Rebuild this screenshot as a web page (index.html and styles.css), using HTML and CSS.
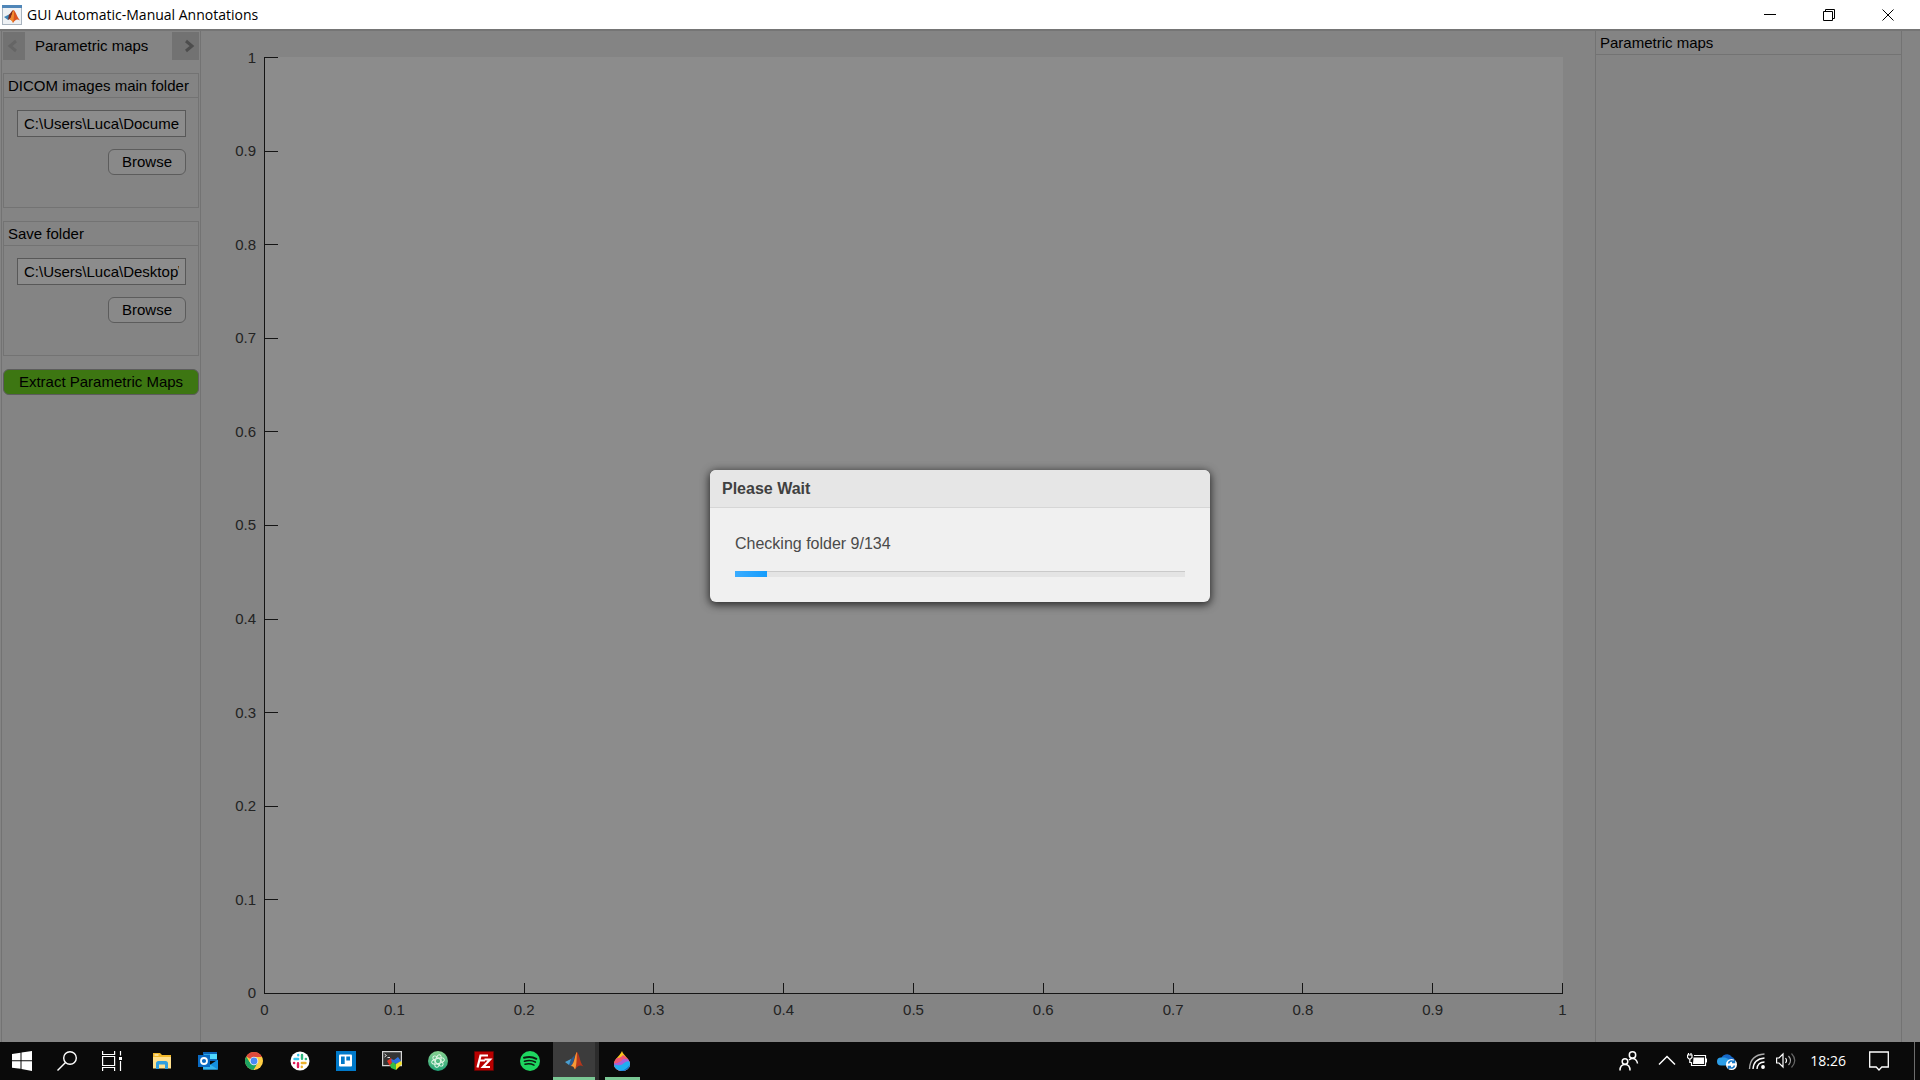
FILE: index.html
```html
<!DOCTYPE html>
<html lang="en">
<head>
<meta charset="utf-8">
<title>GUI Automatic-Manual Annotations</title>
<link rel="stylesheet" href="styles.css">
</head>
<body>
<header class="titlebar">
  <svg class="app-icon" viewBox="0 0 20 20" aria-hidden="true">
    <rect x="0.5" y="0.5" width="19" height="19" fill="#eef1f4" stroke="#a9b4bf"/>
    <rect x="0" y="0" width="20" height="3" fill="#4f86b8"/>
    <path d="M2 12 7 9.500 9 11 6 15z" fill="#3f83b5"/>
    <path d="M7 9.500C9 8 10 5 11.500 5L9 13 6 15z" fill="#7a2a1c"/>
    <path d="M11.500 5C13.500 6 15 12 18 15.500 15 13.500 13 15 11 18 10.500 16 9 14.500 7.500 14.500 10 12 10 7 11.500 5z" fill="#d9541e"/>
    <path d="M11.500 5C12.500 8 12 13 11 18 10.500 16 9 14.500 7.500 14.500 10 12 10 7 11.500 5z" fill="#f08a2c"/>
  </svg>
  <h1 class="title">GUI Automatic-Manual Annotations</h1>
  <div class="window-controls">
    <button class="window-button" aria-label="Minimize"><svg viewBox="0 0 12 12"><path d="M0 5.500H12"/></svg></button>
    <button class="window-button" aria-label="Restore"><svg viewBox="0 0 12 12"><path d="M.5 2.500h9v9h-9zM2.500 2.500v-2h9v9h-2"/></svg></button>
    <button class="window-button" aria-label="Close"><svg viewBox="0 0 12 12"><path d="M.5.5l11 11M11.500.5l-11 11"/></svg></button>
  </div>
</header>

<main class="workspace">
  <aside class="sidebar">
    <nav class="pager">
      <button class="pager-button pager-off" aria-label="Previous"><svg viewBox="0 0 12 14"><path d="M9 2 3 7l6 5"/></svg></button>
      <h2 class="pager-title">Parametric maps</h2>
      <button class="pager-button" aria-label="Next"><svg viewBox="0 0 12 14"><path d="M3 2l6 5-6 5"/></svg></button>
    </nav>
    <section class="panel">
      <label class="panel-title" for="dicom">DICOM images main folder</label>
      <div class="panel-body">
        <input class="path" id="dicom" type="text" value="C:\Users\Luca\Documents">
        <button class="browse">Browse</button>
      </div>
    </section>
    <section class="panel">
      <label class="panel-title" for="save">Save folder</label>
      <div class="panel-body">
        <input class="path" id="save" type="text" value="C:\Users\Luca\Desktop\Maps">
        <button class="browse">Browse</button>
      </div>
    </section>
    <button class="extract">Extract Parametric Maps</button>
  </aside>

  <section class="plot" aria-label="Axes">
    <ol class="y-axis">
      <li>1</li><li>0.9</li><li>0.8</li><li>0.7</li><li>0.6</li><li>0.5</li><li>0.4</li><li>0.3</li><li>0.2</li><li>0.1</li><li>0</li>
    </ol>
    <div class="axes">
      <div class="y-ticks"><i></i><i></i><i></i><i></i><i></i><i></i><i></i><i></i><i></i><i></i><i></i></div>
      <div class="x-ticks"><i></i><i></i><i></i><i></i><i></i><i></i><i></i><i></i><i></i><i></i><i></i></div>
    </div>
    <ol class="x-axis">
      <li>0</li><li>0.1</li><li>0.2</li><li>0.3</li><li>0.4</li><li>0.5</li><li>0.6</li><li>0.7</li><li>0.8</li><li>0.9</li><li>1</li>
    </ol>
  </section>

  <aside class="results">
    <h2 class="results-title">Parametric maps</h2>
  </aside>

  <div class="overlay">
    <section class="dialog" role="dialog" aria-labelledby="wait-title">
      <h2 class="dialog-title" id="wait-title">Please Wait</h2>
      <div class="dialog-body">
        <p class="dialog-text">Checking folder 9/134</p>
        <div class="progress" role="progressbar" aria-valuenow="9" aria-valuemax="134"><div class="progress-fill" style="width: 7%"></div></div>
      </div>
    </section>
  </div>
</main>

<footer class="taskbar">
  <div class="system">
    <button class="task" aria-label="Start"><svg viewBox="0 0 20 20"><path fill="#fff" d="M0 3 8.500 1.800V9.300H0zM9.500 1.600 20 0v9.300H9.500zM0 10.300h8.500v7.500L0 16.700zM9.500 10.300H20V20L9.500 18z"/></svg></button>
    <button class="task" aria-label="Search"><svg viewBox="0 0 20 20" fill="none" stroke="#fff" stroke-width="1.400"><circle cx="13" cy="7" r="6.300"/><path d="M8.500 11.500.5 19.500"/></svg></button>
    <button class="task" aria-label="Task view"><svg viewBox="0 0 20 20" fill="none" stroke="#fff" stroke-width="1.200"><path d="M.6 0v3.500h12V0M.6 5.500h12v9H.6zM.6 20v-3.500h12V20M18.500 0v4.500M18.500 10v10"/><path fill="#fff" stroke="none" d="M17 6h3v3h-3z"/></svg></button>
  </div>
  <div class="apps">
    <button class="task" aria-label="File Explorer"><svg viewBox="0 0 20 20"><path fill="#f2b92b" d="M1 2h7l2 2h9v3H1z"/><path fill="#fff" d="M2.500 3.500h4v1h-4z"/><path fill="#ffe08c" d="M1 6h18v11.500H1z"/><path fill="#2f9fdf" d="M4 18v-5.500q0-2.500 2.500-2.500h7q2.500 0 2.500 2.500V18h-3v-4.500H7V18z"/></svg></button>
    <button class="task" aria-label="Outlook"><svg viewBox="0 0 20 20"><path fill="#0a63b8" d="M5 1h14v9H5z"/><path fill="#28a8ea" d="M6 3h6v5H6z"/><path fill="#50d9ff" d="M12 3h7v5h-7z"/><path fill="#1490df" d="M5 18.500 20 8.500v10z"/><path fill="#37b5ee" d="M5 9l15 9.500H5z"/><path fill="#0a6ac2" d="M0 4h12v12H0z"/><circle cx="6" cy="10" r="3" fill="none" stroke="#fff" stroke-width="1.800"/></svg></button>
    <button class="task" aria-label="Chrome"><svg viewBox="0 0 20 20"><circle cx="10" cy="10" r="9" fill="#ffce44"/><path fill="#dd4b3e" d="M10 10 2.200 5.500A9 9 0 0 1 18 6H10z"/><path fill="#1da362" d="M2.200 5.500A9 9 0 0 0 9.500 19l4-7L10 10 5.500 11z"/><circle cx="10" cy="10" r="4.300" fill="#f3f3f3"/><circle cx="10" cy="10" r="3.400" fill="#4a8af4"/></svg></button>
    <button class="task" aria-label="Slack"><svg viewBox="0 0 20 20"><circle cx="10" cy="10" r="9.500" fill="#fff"/><g fill="none" stroke-width="2.400" stroke-linecap="round"><path stroke="#36c5f0" d="M4.500 8h3.700M8.200 4v.2"/><path stroke="#2eb67d" d="M12 4v3.700M15.800 8H16"/><path stroke="#ecb22e" d="M15.500 12h-3.700M11.800 16v-.2"/><path stroke="#e01e5a" d="M8 16v-3.700M4.200 12H4"/></g></svg></button>
    <button class="task" aria-label="Trello"><svg viewBox="0 0 20 20"><path fill="#0079c9" d="M0 0h20v20H0z"/><rect x="3" y="3.500" width="13" height="12" rx="1" fill="#fff"/><path fill="#0079c9" d="M5 5.500h3.700v7.500H5zM10.300 5.500H14v4h-3.700z"/></svg></button>
    <button class="task" aria-label="Terminal"><svg viewBox="0 0 20 20"><path fill="#343434" stroke="#d4d4d4" stroke-width="1.200" d="M.6.6h18.800v14H.6z"/><path fill="none" stroke="#ddd" d="M2.500 3l2 1.500-2 1.500M5.500 6.500H8"/><path fill="#e53222" d="M5 10 9 7l2 3-3 5z"/><path fill="#2c70e0" d="M9 8l3 1 4-3 3 4-4 3-5-1z"/><path fill="#37bc45" d="M8 14l3-3 4 3-1 5-5-2z"/><path fill="#f2df25" d="M14 13l5-3 1 3-6 6z"/></svg></button>
    <button class="task" aria-label="Atom"><svg viewBox="0 0 20 20"><defs><linearGradient id="atom" x2="0" y2="1"><stop stop-color="#8ad391"/><stop offset="1" stop-color="#20a377"/></linearGradient></defs><circle cx="10" cy="10" r="10" fill="url(#atom)"/><g fill="none" stroke="#e6f7e8" stroke-width="1"><ellipse cx="10" cy="10" rx="2.600" ry="6.500" transform="rotate(15 10 10)"/><ellipse cx="10" cy="10" rx="2.600" ry="6.500" transform="rotate(75 10 10)"/><ellipse cx="10" cy="10" rx="2.600" ry="6.500" transform="rotate(135 10 10)"/></g></svg></button>
    <button class="task" aria-label="FileZilla"><svg viewBox="0 0 20 20"><path fill="#b80000" stroke="#6d0000" stroke-dasharray="1 1" d="M.5.5h19v19H.5z"/><path fill="none" stroke="#fff" stroke-width="2.200" d="M3.500 16.500 6.500 4.500H14M5 9.500h6M10.500 8.500H16L9 16h7"/></svg></button>
    <button class="task" aria-label="Spotify"><svg viewBox="0 0 20 20"><circle cx="10" cy="10" r="10" fill="#1ed760"/><g fill="none" stroke="#0b1a10" stroke-linecap="round"><path stroke-width="2" d="M4 6.800Q11 4.800 16.300 7.800"/><path stroke-width="1.700" d="M4.500 10.200Q10.500 8.500 15.300 11"/><path stroke-width="1.400" d="M5 13.300Q10 12 14 14.200"/></g></svg></button>
    <button class="task task-active" aria-label="MATLAB"><svg viewBox="0 0 20 20"><path fill="#4a9fd0" d="M1 11 7 8l2 2-4 4z"/><path fill="#285a8d" d="M5 14 7 8l4-4-2 9-2 2z"/><path fill="#b5361c" d="M13 1c2 1 3 11 6.500 14.500C16 13.500 13.500 15 11 18.500 10 16 9 15 7 15c4-3 4-13 6-14z"/><path fill="#f59a37" d="M13 1c-2 1-2 11-6 14 2 0 3 1 4 3.500C13 14 12.500 6 13 1z"/></svg></button>
    <button class="task task-open" aria-label="Paint 3D"><svg viewBox="0 0 20 20"><defs><clipPath id="drop"><path d="M10 0c1 4 8 8 8 13a8 7 0 0 1-16 0C2 8 8 5 10 0z"/></clipPath></defs><g clip-path="url(#drop)"><path fill="#f9c51d" d="M0 0h20v20H0z"/><path fill="#ee5575" d="M0 7q8 1 11-3l9 6v10H0z"/><path fill="#aa5fd6" d="M0 12q8 1 11-4l9 0v12H0z"/><path fill="#21aef0" d="M0 13q9 3 12-1 3-3 8-1v9H0z"/><path fill="#1172c9" d="M7 20c5 0 8-3 11-6v6z"/></g></svg></button>
  </div>
  <div class="tray">
    <button class="tray-button people" aria-label="People"><svg viewBox="0 0 20 20" fill="none" stroke="#fff" stroke-width="1.500"><circle cx="13.500" cy="4" r="3.200"/><circle cx="6" cy="10.500" r="2.800"/><path d="M1 19.500q0-6 5-6t5 6M10 9q3.500-3 6.500-.5 2 2 2 4"/></svg></button>
    <button class="tray-button" aria-label="Show hidden icons"><svg viewBox="0 0 20 20" fill="none" stroke="#fff" stroke-width="1.500"><path d="M2 13.500 10 5.500l8 8"/></svg></button>
    <button class="tray-button" aria-label="Battery"><svg viewBox="0 0 20 20" fill="none" stroke="#fff" stroke-width="1.200"><path d="M7 4.500h11.500v10H4.500v-3M19.500 7.500v4M1.500 2v2M4 2v2M.5 4h4.500v2.500l-1.500 1.500h-1.500l-1.500-1.500zM2.800 8v3.500h2"/><path fill="#fff" stroke="none" d="M6.500 6.500H17v6.500H6z"/></svg></button>
    <button class="tray-button" aria-label="OneDrive"><svg viewBox="0 0 20 20"><path fill="#1668c7" d="M4 9a6 6 0 0 1 11-3 5 5 0 0 1 3 5H4z"/><path fill="#2c9ee8" d="M4 6.500a4 4 0 0 0 0 8h9l2-5-7-3z"/><circle cx="14.500" cy="13.500" r="5.500" fill="#fff"/><path fill="none" stroke="#1778c8" stroke-width="1.500" d="M11.500 12.500a3.200 3.200 0 0 1 5.500-1.500M17.500 14.500a3.200 3.200 0 0 1-5.500 1.500M17.500 9v2.500H15M11.500 18v-2.500H14"/></svg></button>
    <button class="tray-button wifi" aria-label="Network"><svg viewBox="0 0 20 20" fill="none" stroke="#fff" stroke-width="1.400"><path stroke="#aaa" d="M2.500 18Q3 4 17.500 3"/><path d="M6 18Q6.500 8 17.500 7M10 18q.5-7 7.500-7"/><circle cx="16" cy="16" r="1.200" fill="#fff"/></svg></button>
    <button class="tray-button" aria-label="Volume"><svg viewBox="0 0 20 20" fill="none" stroke="#fff" stroke-width="1.200"><path d="M.6 7H3l4-4v13l-4-4H.6zM9.500 7q2 2.500 0 5"/><path stroke="#aaa" d="M12.500 5q4 4.500 0 9"/><path stroke="#666" d="M15.500 2.500q6.500 7 0 14"/></svg></button>
    <time class="clock">18:26</time>
    <button class="tray-button" aria-label="Notifications"><svg viewBox="0 0 20 20" fill="none" stroke="#fff" stroke-width="1.300"><path d="M.7 1h18.600v15h-6.500L10 19l-2.800-3H.7z"/></svg></button>
    <button class="show-desktop" aria-label="Show desktop"></button>
  </div>
</footer>
</body>
</html>
```
FILE: styles.css
```css
* {
  box-sizing: border-box;
}

body {
  margin: 0;
  min-height: 100vh;
  display: flex;
  flex-direction: column;
  overflow: hidden;
  background: #f0f0f0;
  color: #000;
  font: 15px/20px "Liberation Sans", Arial, sans-serif;
}

h1, h2, p, ol {
  margin: 0;
  padding: 0;
  font-size: inherit;
  font-weight: normal;
  list-style: none;
}

button, input {
  margin: 0;
  padding: 0;
  border: 0;
  background: none;
  color: inherit;
  font: inherit;
}

svg {
  display: block;
}

/* Title bar */

.titlebar {
  display: flex;
  align-items: center;
  height: 29px;
  padding-left: 2px;
  background: #fff;
}

.app-icon {
  width: 20px;
  height: 20px;
  margin-right: 5px;
}

.title {
  font: 14px/20px "Open Sans", "Noto Sans", sans-serif;
}

.window-controls {
  display: flex;
  margin-left: auto;
  padding-right: 3px;
}

.window-button {
  display: grid;
  place-items: center;
  width: 59px;
  height: 29px;
}

.window-button svg {
  width: 12px;
  height: 12px;
  fill: none;
  stroke: #000;
}

/* Workspace */

.workspace {
  position: relative;
  flex: 1;
  display: grid;
  grid-template-columns: 200px 1fr 307px;
  padding: 0 18px 0 1px;
  border-top: 2px solid #d6d6d6;
}

.sidebar {
  display: flex;
  flex-direction: column;
  gap: 13px;
  padding: 1px 1px 0;
  border: solid #d2d2d2;
  border-width: 0 1px;
}

.pager {
  display: flex;
  align-items: center;
  height: 28px;
}

.pager-title {
  flex: 1;
  padding-left: 10px;
}

.pager-button {
  display: grid;
  place-items: center;
  width: 27px;
  height: 28px;
  padding-left: 6px;
  background: #cfcfcf;
}

.pager-button svg {
  width: 12px;
  height: 14px;
  fill: none;
  stroke: #8c8c8c;
  stroke-width: 3;
}

.pager-off {
  width: 22px;
  padding: 0 2px 0 0;
}

.pager-off svg {
  stroke: #b8b8b8;
}

.panel {
  height: 135px;
  border: 1px solid #d2d2d2;
}

.panel-title,
.results-title {
  display: block;
  height: 24px;
  padding: 2px 4px;
  border-bottom: 1px solid #d2d2d2;
}

.panel-body {
  display: flex;
  flex-direction: column;
  align-items: flex-end;
  gap: 12px;
  padding: 12px 12px 12px 13px;
}

.path {
  width: 100%;
  height: 27px;
  padding: 0 6px;
  border: 1px solid #a0a0a0;
  background: #fff;
}

.browse,
.extract {
  height: 26px;
  border: 1px solid #a8a8a8;
  border-radius: 6px;
}

.browse {
  width: 78px;
  background: #f9f9f9;
}

.extract {
  background: #6fd821;
}

/* Plot */

.plot {
  display: grid;
  grid-template-columns: 55px 1fr;
  grid-template-rows: 1fr 26px;
  gap: 0 8px;
  padding: 26px 32px 22px 0;
}

.y-axis {
  display: flex;
  flex-direction: column;
  justify-content: space-between;
}

.y-axis li {
  display: flex;
  align-items: center;
  justify-content: flex-end;
  height: 1px;
  color: #404040;
}

.axes {
  display: grid;
  background: #fff;
  border-left: 1px solid #262626;
  border-bottom: 1px solid #262626;
}

.y-ticks,
.x-ticks {
  grid-area: 1 / 1;
  display: flex;
  justify-content: space-between;
}

.y-ticks {
  flex-direction: column;
  margin-bottom: -1px;
}

.x-ticks {
  align-items: flex-end;
  margin-left: -1px;
}

.y-ticks i {
  width: 13px;
  height: 1px;
  background: #262626;
}

.x-ticks i {
  width: 1px;
  height: 10px;
  background: #262626;
}

.x-axis {
  grid-column: 2;
  display: flex;
  justify-content: space-between;
  padding-top: 6px;
}

.x-axis li {
  display: flex;
  justify-content: center;
  width: 1px;
  color: #404040;
}

.results {
  border: solid #d2d2d2;
  border-width: 0 1px;
}

/* Progress dialog */

.overlay {
  position: absolute;
  inset: -2px 0 0;
  display: grid;
  place-items: center;
  background: rgba(0, 0, 0, 0.45);
}

.dialog {
  width: 500px;
  border-radius: 6px;
  overflow: hidden;
  background: #f0f0f0;
  box-shadow: 0 2px 8px 1px rgba(0, 0, 0, 0.7);
  font-size: 16px;
}

.dialog-title {
  padding: 9px 12px 8px;
  border-bottom: 1px solid #d6d6d6;
  background: #e6e6e6;
  color: #404040;
  font-weight: bold;
}

.dialog-body {
  display: flex;
  flex-direction: column;
  gap: 17px;
  padding: 26px 25px 25px;
}

.dialog-text {
  color: #4a4a4a;
}

.progress {
  height: 6px;
  border-top: 1px solid #cacaca;
  background: #e4e4e4;
}

.progress-fill {
  height: 6px;
  margin-top: -1px;
  background: linear-gradient(90deg, #3aacff, #149cfc);
}

/* Taskbar */

.taskbar {
  display: flex;
  height: 38px;
  background: #0a0a0a;
  color: #fff;
}

.system,
.apps {
  display: flex;
}

.system {
  padding-right: 4px;
}

.task {
  display: grid;
  place-items: center;
  width: 45px;
  height: 38px;
  padding-right: 1px;
}

.apps .task {
  width: 46px;
}

.task svg {
  width: 20px;
  height: 20px;
}

.apps .task-active {
  padding: 0;
  border-right: 4px solid #2c2c2c;
  background: #3c3c3c;
  box-shadow: inset 0 -3px #7ac794;
}

.task-open {
  background: linear-gradient(#7ac794, #7ac794) center bottom / 35px 3px no-repeat;
}

.tray {
  display: flex;
  align-items: center;
  gap: 10px;
  margin-left: auto;
}

.tray-button svg {
  width: 20px;
  height: 20px;
}

.people {
  margin-right: 8px;
}

.wifi {
  margin-right: -1px;
}

.clock {
  margin: 0 13px 0 4px;
  font: 14px/20px "Open Sans", "Noto Sans", sans-serif;
}

.show-desktop {
  width: 6px;
  height: 38px;
  margin-left: 15px;
  border-left: 1px solid #6c6c6c;
}
```
